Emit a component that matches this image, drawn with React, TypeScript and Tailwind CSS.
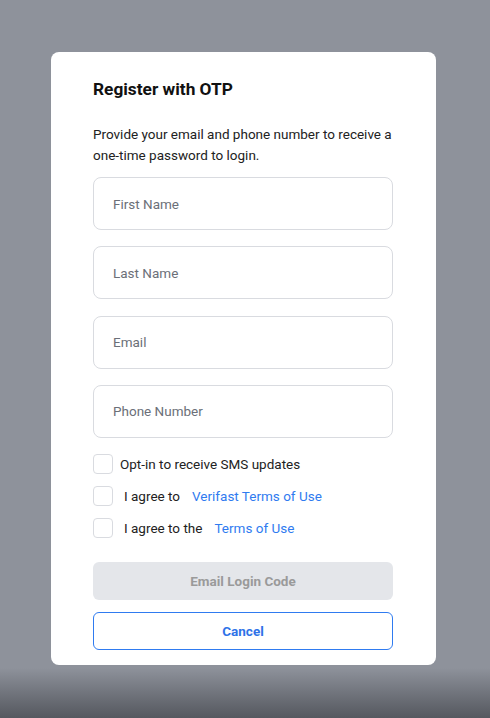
export default function App() {
  const fields = ["First Name", "Last Name", "Email", "Phone Number"];

  return (
    <div className="relative min-h-[718px] w-full bg-[#8e929b] font-['Roboto','Liberation_Sans',sans-serif] flex flex-col items-start pl-[51px] overflow-hidden">
      <div className="absolute inset-x-0 bottom-0 h-[50px] bg-gradient-to-b from-[#8e929b] to-[#55585f]" />

      <div className="relative mt-[52px] w-[385px] rounded-[8px] bg-white pl-[42px] pr-[43px] pt-[25px] pb-[15px]">
        <h1 className="text-[17.3px] leading-[24px] font-bold text-[#111111]">Register with OTP</h1>

        <p className="mt-[23px] text-[13.5px] leading-[21px] text-[#222222]">
          Provide your email and phone number to receive a one-time password to login.
        </p>

        <div className="mt-[11px] flex flex-col gap-[16.3px]">
          {fields.map((f) => (
            <input
              key={f}
              placeholder={f}
              className="h-[53px] w-full rounded-[8px] border border-[#d9dbe0] bg-white px-[19px] text-[13.5px] text-[#222] placeholder:text-[#6b6f78] outline-none"
            />
          ))}
        </div>

        <div className="mt-[16px] flex flex-col gap-[12px]">
          <label className="flex h-[20px] items-center gap-[7px] text-[13.5px] text-[#222]">
            <span className="h-[20px] w-[20px] shrink-0 rounded-[4px] border border-[#d9dbe0] bg-white" />
            <span>Opt-in to receive SMS updates</span>
          </label>
          <label className="flex h-[20px] items-center text-[13.5px] text-[#222]">
            <span className="h-[20px] w-[20px] shrink-0 rounded-[4px] border border-[#d9dbe0] bg-white" />
            <span className="ml-[11px]">I agree to</span>
            <a className="ml-[12px] text-[#2f7bf0]">Verifast Terms of Use</a>
          </label>
          <label className="flex h-[20px] items-center text-[13.5px] text-[#222]">
            <span className="h-[20px] w-[20px] shrink-0 rounded-[4px] border border-[#d9dbe0] bg-white" />
            <span className="ml-[11px]">I agree to the</span>
            <a className="ml-[12px] text-[#2f7bf0]">Terms of Use</a>
          </label>
        </div>

        <button
          disabled
          className="mt-[24px] h-[38px] w-full rounded-[6px] bg-[#e4e6ea] text-[13.5px] font-bold text-[#9a9a9a]"
        >
          Email Login Code
        </button>
        <button className="mt-[12px] h-[38px] w-full rounded-[6px] border border-[#2f7bf0] bg-white text-[13.5px] font-bold text-[#2f73e8]">
          Cancel
        </button>
      </div>
    </div>
  );
}
